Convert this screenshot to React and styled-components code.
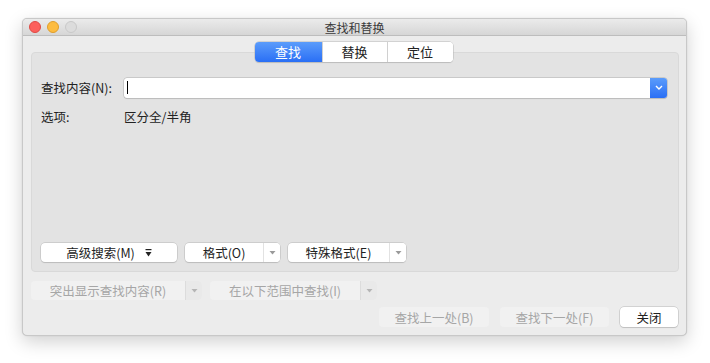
import React, { useState } from 'react'
import styled, { createGlobalStyle } from 'styled-components'

const Global = createGlobalStyle`
  html, body { margin: 0; padding: 0; background: #fff; }
  body { font-family: "Noto Sans CJK SC", "Liberation Sans", sans-serif; }
`

const Page = styled.div`
  width: 710px;
  height: 363px;
  padding: 18px 0 0 22px;
  box-sizing: border-box;
`

const Window = styled.div`
  width: 665px;
  height: 318px;
  box-sizing: border-box;
  background: #ececec;
  border: 1px solid #c8c8c8;
  border-radius: 5px;
  box-shadow: 0 6px 18px rgba(0,0,0,0.18), 0 0 1px rgba(0,0,0,0.2);
  display: flex;
  flex-direction: column;
  overflow: hidden;
`

const TitleBar = styled.div`
  height: 16px;
  flex: none;
  position: relative;
  display: flex;
  align-items: center;
  justify-content: center;
  background: linear-gradient(#ebebeb, #d6d6d6);
  border-bottom: 1px solid #bdbdbd;
  font-size: 12px;
  color: #3a3a3a;
`

const Lights = styled.div`
  position: absolute;
  left: 6px;
  top: 2px;
  display: flex;
  gap: 6px;
`

const Light = styled.span`
  width: 12px;
  height: 12px;
  border-radius: 50%;
  box-sizing: border-box;
  background: ${p => p.$c};
  border: 1px solid ${p => p.$b};
`

const Body = styled.div`
  flex: 1;
  display: flex;
  flex-direction: column;
  padding: 6px 7px 0 7px;
`

const TabBar = styled.div`
  align-self: center;
  display: flex;
  position: relative;
  z-index: 1;
  margin-bottom: -10px;
  margin-left: -2px;
  border-radius: 4px;
  box-shadow: 0 0 0 0.5px #b8b8b8, 0 1px 1px rgba(0,0,0,0.15);
  background: #fff;
`

const Tab = styled.button`
  all: unset;
  width: ${p => p.$w}px;
  height: 20px;
  text-align: center;
  font-size: 13px;
  line-height: 20px;
  color: ${p => (p.$active ? '#fff' : '#222')};
  background: ${p => (p.$active ? 'linear-gradient(#5b9cfb, #2a6ff5)' : '#fff')};
  border-left: ${p => (p.$first ? 'none' : '1px solid #d0d0d0')};
  border-radius: ${p => (p.$first ? '4px 0 0 4px' : p.$last ? '0 4px 4px 0' : '0')};
`

const Panel = styled.div`
  height: 220px;
  box-sizing: border-box;
  margin-left: 1px;
  background: #e3e3e3;
  border: 1px solid #d9d9d9;
  border-radius: 4px;
  padding: 24px 11px 9px 9px;
  display: flex;
  flex-direction: column;
`

const FieldRow = styled.div`
  display: flex;
  align-items: center;
  font-size: 12.5px;
  color: #222;
  height: 21px;
`

const Label = styled.span`
  width: 83px;
  flex: none;
`

const Combo = styled.div`
  flex: 1;
  height: 20px;
  display: flex;
  background: #fff;
  border-radius: 3px;
  box-shadow: 0 0 0 0.5px #b0b0b0, 0 1px 1px rgba(0,0,0,0.12);
`

const Input = styled.div`
  flex: 1;
  display: flex;
  align-items: center;
  padding-left: 3px;
`

const Caret = styled.span`
  width: 1px;
  height: 13px;
  background: #000;
`

const BlueArrow = styled.div`
  width: 17px;
  display: flex;
  align-items: center;
  justify-content: center;
  background: linear-gradient(#5b9cfb, #2a6ff5);
  border-radius: 0 3px 3px 0;
`

const OptionRow = styled.div`
  display: flex;
  font-size: 12.5px;
  color: #222;
  margin-top: 9px;
`

const Spacer = styled.div`
  flex: 1;
`

const ButtonRow = styled.div`
  display: flex;
  align-items: center;
  gap: ${p => p.$gap || 8}px;
  justify-content: ${p => (p.$end ? 'flex-end' : 'flex-start')};
`

const Btn = styled.button`
  all: unset;
  box-sizing: border-box;
  width: ${p => p.$w}px;
  height: ${p => p.$h || 19}px;
  display: flex;
  align-items: center;
  justify-content: center;
  gap: 10px;
  font-size: 12.5px;
  color: ${p => (p.$disabled ? '#a6a6a6' : '#222')};
  background: ${p => (p.$disabled ? '#f1f1f1' : '#fff')};
  border-radius: 4px;
  box-shadow: ${p => (p.$disabled ? 'none' : '0 0 0 0.5px #b8b8b8, 0 1px 1px rgba(0,0,0,0.15)')};
`

const Split = styled.div`
  display: flex;
  height: ${p => p.$h || 19}px;
  border-radius: 4px;
  background: ${p => (p.$disabled ? '#f1f1f1' : '#fff')};
  box-shadow: ${p => (p.$disabled ? 'none' : '0 0 0 0.5px #b8b8b8, 0 1px 1px rgba(0,0,0,0.15)')};
  font-size: 12.5px;
  color: ${p => (p.$disabled ? '#a6a6a6' : '#222')};
`

const SplitMain = styled.div`
  width: ${p => p.$w}px;
  display: flex;
  align-items: center;
  justify-content: center;
`

const SplitArrow = styled.div`
  width: 16px;
  display: flex;
  align-items: center;
  justify-content: center;
  border-left: 1px solid ${p => (p.$disabled ? '#dcdcdc' : '#e2e2e2')};
  background: ${p => (p.$disabled ? '#e9e9e9' : '#fff')};
  border-radius: 0 4px 4px 0;
`

const Footer = styled.div`
  display: flex;
  flex-direction: column;
  padding: 9px 1px 0 1px;
  gap: 7px;
`

const Tri = ({ color = '#9a9a9a' }) => (
  <svg width="7" height="5" viewBox="0 0 7 5">
    <path d="M0.5 1 L6.5 1 L3.5 4.5 Z" fill={color} />
  </svg>
)

const MoreIcon = () => (
  <svg width="7" height="8" viewBox="0 0 7 8">
    <rect x="0.5" y="0" width="6" height="1.2" fill="#222" />
    <path d="M0.5 3 L6.5 3 L3.5 7.5 Z" fill="#222" />
  </svg>
)

const Chevron = () => (
  <svg width="8" height="5" viewBox="0 0 8 5">
    <path d="M1 1 L4 4 L7 1" stroke="#fff" strokeWidth="1.4" fill="none" />
  </svg>
)

function App() {
  const [tab, setTab] = useState(0)
  const tabs = [
    { name: '查找', w: 67 },
    { name: '替换', w: 64 },
    { name: '定位', w: 65 },
  ]

  return (
    <Page>
      <Global />
      <Window>
        <TitleBar>
          <Lights>
            <Light $c="#fc605c" $b="#de4a45" />
            <Light $c="#fdbc40" $b="#de9e2c" />
            <Light $c="#dcdcdc" $b="#c8c8c8" />
          </Lights>
          查找和替换
        </TitleBar>
        <Body>
          <TabBar>
            {tabs.map((t, i) => (
              <Tab
                key={t.name}
                $w={t.w}
                $active={tab === i}
                $first={i === 0}
                $last={i === tabs.length - 1}
                onClick={() => setTab(i)}
              >
                {t.name}
              </Tab>
            ))}
          </TabBar>
          <Panel>
            <FieldRow>
              <Label>查找内容(N):</Label>
              <Combo>
                <Input><Caret /></Input>
                <BlueArrow><Chevron /></BlueArrow>
              </Combo>
            </FieldRow>
            <OptionRow>
              <Label>选项:</Label>
              <span>区分全/半角</span>
            </OptionRow>
            <Spacer />
            <ButtonRow>
              <Btn $w={136}>高级搜索(M) <MoreIcon /></Btn>
              <Split>
                <SplitMain $w={78}>格式(O)</SplitMain>
                <SplitArrow><Tri /></SplitArrow>
              </Split>
              <Split>
                <SplitMain $w={101}>特殊格式(E)</SplitMain>
                <SplitArrow><Tri /></SplitArrow>
              </Split>
            </ButtonRow>
          </Panel>
          <Footer>
            <ButtonRow>
              <Split $disabled>
                <SplitMain $w={154}>突出显示查找内容(R)</SplitMain>
                <SplitArrow $disabled><Tri color="#b5b5b5" /></SplitArrow>
              </Split>
              <Split $disabled>
                <SplitMain $w={150}>在以下范围中查找(I)</SplitMain>
                <SplitArrow $disabled><Tri color="#b5b5b5" /></SplitArrow>
              </Split>
            </ButtonRow>
            <ButtonRow $end $gap={11}>
              <Btn $w={110} $h={20} $disabled>查找上一处(B)</Btn>
              <Btn $w={109} $h={20} $disabled>查找下一处(F)</Btn>
              <Btn $w={58} $h={20}>关闭</Btn>
            </ButtonRow>
          </Footer>
        </Body>
      </Window>
    </Page>
  )
}

export default App
